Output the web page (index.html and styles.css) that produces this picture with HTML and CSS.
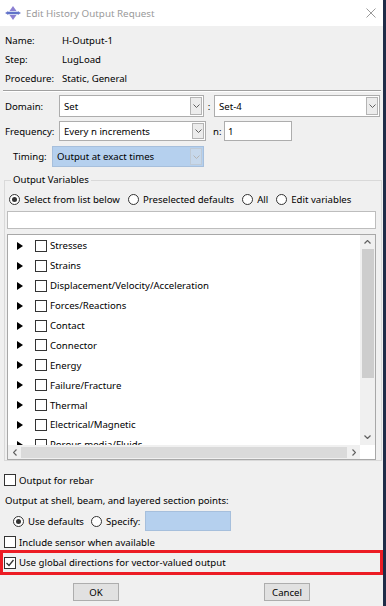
FILE: index.html
```html
<!DOCTYPE html>
<html>
<head>
<meta charset="utf-8">
<title>Edit History Output Request</title>
<link rel="stylesheet" href="styles.css">
</head>
<body>
<div class="window">
  <div class="titlebar">
    <svg class="appicon" width="16" height="14" viewBox="0 0 16 14">
      <path d="M8 0 L11.5 5 H4.5 Z" fill="#8b7fd2"/>
      <path d="M0 7 L3 5.3 V8.7 Z" fill="#6d79cc"/>
      <path d="M16 7 L13 5.3 V8.7 Z" fill="#6d79cc"/>
      <rect x="2.5" y="5.7" width="11" height="2.6" fill="#5f73c9"/>
      <path d="M4.5 9 H11.5 L8 14 Z" fill="#8b7fd2"/>
    </svg>
    <span class="title">Edit History Output Request</span>
    <svg class="close" width="10" height="10" viewBox="0 0 10 10">
      <path d="M0.5 0.5 L9.5 9.5 M9.5 0.5 L0.5 9.5" stroke="#9a9a9a" stroke-width="1"/>
    </svg>
  </div>

  <div class="info">
    <span>Name:</span><span>H-Output-1</span>
    <span>Step:</span><span>LugLoad</span>
    <span>Procedure:</span><span>Static, General</span>
  </div>

  <div class="sep"></div>

  <div class="row row-domain">
    <span class="lbl lbl-domain">Domain:</span>
    <div class="combo c-domain">
      <span class="val">Set</span>
      <span class="dd"><svg width="7" height="4" viewBox="0 0 7 4"><polyline points="0.5,0.5 3.5,3.5 6.5,0.5" fill="none" stroke="#606060"/></svg></span>
    </div>
    <span class="colon">:</span>
    <div class="combo c-set">
      <span class="val">Set-4</span>
      <span class="dd"><svg width="7" height="4" viewBox="0 0 7 4"><polyline points="0.5,0.5 3.5,3.5 6.5,0.5" fill="none" stroke="#606060"/></svg></span>
    </div>
  </div>

  <div class="row row-freq">
    <span class="lbl lbl-domain">Frequency:</span>
    <div class="combo c-freq">
      <span class="val">Every n increments</span>
      <span class="dd"><svg width="7" height="4" viewBox="0 0 7 4"><polyline points="0.5,0.5 3.5,3.5 6.5,0.5" fill="none" stroke="#606060"/></svg></span>
    </div>
    <span class="nlbl">n:</span>
    <div class="textbox n-input">1</div>
  </div>

  <div class="row row-timing">
    <span class="lbl lbl-timing">Timing:</span>
    <div class="combo c-timing">
      <span class="val">Output at exact times</span>
      <span class="dd dd-disabled"><svg width="7" height="4" viewBox="0 0 7 4"><polyline points="0.5,0.5 3.5,3.5 6.5,0.5" fill="none" stroke="#b4b4b4"/></svg></span>
    </div>
  </div>

  <fieldset class="group">
    <legend>Output Variables</legend>
    <div class="radios">
      <span class="opt"><span class="radio on"></span>Select from list below</span>
      <span class="opt"><span class="radio"></span>Preselected defaults</span>
      <span class="opt"><span class="radio"></span>All</span>
      <span class="opt"><span class="radio"></span>Edit variables</span>
    </div>
    <div class="filter"></div>
    <div class="listbox">
      <div class="items">
        <div class="item"><span class="tri"></span><span class="cb"></span>Stresses</div>
        <div class="item"><span class="tri"></span><span class="cb"></span>Strains</div>
        <div class="item"><span class="tri"></span><span class="cb"></span>Displacement/Velocity/Acceleration</div>
        <div class="item"><span class="tri"></span><span class="cb"></span>Forces/Reactions</div>
        <div class="item"><span class="tri"></span><span class="cb"></span>Contact</div>
        <div class="item"><span class="tri"></span><span class="cb"></span>Connector</div>
        <div class="item"><span class="tri"></span><span class="cb"></span>Energy</div>
        <div class="item"><span class="tri"></span><span class="cb"></span>Failure/Fracture</div>
        <div class="item"><span class="tri"></span><span class="cb"></span>Thermal</div>
        <div class="item"><span class="tri"></span><span class="cb"></span>Electrical/Magnetic</div>
        <div class="item"><span class="tri"></span><span class="cb"></span>Porous media/Fluids</div>
      </div>
      <div class="vscroll">
        <span class="arrow"><svg width="7" height="4" viewBox="0 0 7 4"><polyline points="0.5,3.5 3.5,0.5 6.5,3.5" fill="none" stroke="#606060" stroke-width="1.2"/></svg></span>
        <span class="vthumb"></span>
        <span class="arrow arrow-down"><svg width="7" height="4" viewBox="0 0 7 4"><polyline points="0.5,0.5 3.5,3.5 6.5,0.5" fill="none" stroke="#606060" stroke-width="1.2"/></svg></span>
      </div>
      <div class="hscroll">
        <span class="harrow"><svg width="4" height="7" viewBox="0 0 4 7"><polyline points="3.5,0.5 0.5,3.5 3.5,6.5" fill="none" stroke="#606060" stroke-width="1.2"/></svg></span>
        <span class="hthumb"></span>
        <span class="harrow"><svg width="4" height="7" viewBox="0 0 4 7"><polyline points="0.5,0.5 3.5,3.5 0.5,6.5" fill="none" stroke="#606060" stroke-width="1.2"/></svg></span>
      </div>
      <div class="corner"></div>
    </div>
  </fieldset>

  <div class="line line-rebar"><span class="cb"></span>Output for rebar</div>
  <div class="line line-text">Output at shell, beam, and layered section points:</div>
  <div class="line line-points">
    <span class="opt"><span class="radio on"></span>Use defaults</span>
    <span class="opt"><span class="radio"></span>Specify:</span>
    <span class="spec-input"></span>
  </div>
  <div class="line line-sensor"><span class="cb"></span>Include sensor when available</div>
  <div class="redbox">
    <span class="cb checked"><svg width="10" height="10" viewBox="0 0 10 10"><polyline points="1.5,5 4,7.5 8.5,2" fill="none" stroke="#333" stroke-width="1.3"/></svg></span>Use global directions for vector-valued output
  </div>

  <div class="buttons">
    <span class="btn btn-ok">OK</span>
    <span class="btn btn-cancel">Cancel</span>
  </div>
</div>
</body>
</html>
```

FILE: styles.css
```css
* { box-sizing: border-box; }

body {
  margin: 0;
  background: #ffffff;
  font-family: "Noto Sans", "Open Sans", sans-serif;
  font-size: 9.6px;
  color: #000;
}

.window {
  width: 386px;
  height: 606px;
  background: #f0f0f0;
  border-right: 3px solid #1f2c48;
  display: flex;
  flex-direction: column;
  overflow: hidden;
}

.titlebar {
  height: 26px;
  flex: none;
  background: #ffffff;
  display: flex;
  align-items: center;
}
.appicon { margin-left: 5px; }
.title { margin-left: 5px; color: #9a9a9a; font-size: 9.8px; }
.close { margin-left: auto; margin-right: 7px; }

.info {
  display: grid;
  grid-template-columns: 57px auto;
  grid-auto-rows: 19px;
  align-items: center;
  padding: 5px 0 0 5px;
}

.sep {
  margin: 2px 2px 0 3px;
  height: 2px;
  border-top: 1px solid #a0a0a0;
  border-bottom: 1px solid #ffffff;
}

.row { display: flex; align-items: center; flex: none; }
.row-domain { margin-top: 3px; height: 22px; padding-left: 5px; }
.row-freq { margin-top: 4px; height: 20px; padding-left: 5px; }
.row-timing { margin-top: 5px; height: 21px; padding-left: 13px; }

.lbl-domain { width: 54px; }
.lbl-timing { width: 39px; }

.combo {
  height: 100%;
  border: 1px solid #adadad;
  background: #ffffff;
  display: flex;
  align-items: center;
}
.val { flex: 1; padding-left: 4px; white-space: nowrap; }
.dd {
  align-self: stretch;
  width: 12px;
  margin: 1px;
  border: 1px solid #b4b4b4;
  background: #ececec;
  display: flex;
  align-items: center;
  justify-content: center;
}
.dd-disabled { background: #c6d8ec; border-color: #bfcad6; }

.c-domain { width: 145px; }
.colon { width: 10px; text-align: center; }
.c-set { width: 166px; }
.c-freq { width: 147px; }
.nlbl { margin-left: 7px; width: 11px; }
.textbox {
  height: 100%;
  border: 1px solid #adadad;
  background: #ffffff;
  padding-left: 3px;
  display: flex;
  align-items: center;
}
.n-input { width: 68px; }
.c-timing { width: 152px; background: #b5d0ee; border-color: #a6bfdc; }

.group {
  margin: 6px 0 0 4px;
  padding: 3px 5px 0 2px;
  width: 378px;
  min-width: 0;
  border: 1px solid #d9d9d9;
  flex: none;
}
.group legend {
  margin-left: 4px;
  padding: 0 2px;
  line-height: 14px;
}

.radios {
  height: 18px;
  margin-left: 2px;
  display: flex;
  align-items: center;
}
.opt { display: flex; align-items: center; margin-right: 8px; white-space: nowrap; }
.radio {
  width: 11px;
  height: 11px;
  border: 1px solid #333333;
  border-radius: 50%;
  background: #ffffff;
  margin-right: 4px;
  flex: none;
  display: flex;
  align-items: center;
  justify-content: center;
}
.radio.on::after {
  content: "";
  width: 5px;
  height: 5px;
  border-radius: 50%;
  background: #333333;
}

.filter {
  margin-top: 3px;
  height: 18px;
  border: 1px solid #bdbdbd;
  background: #ffffff;
}

.listbox {
  margin-top: 5px;
  height: 226px;
  border: 1px solid #a8a8a8;
  background: #ffffff;
  display: grid;
  grid-template-columns: 1fr 15px;
  grid-template-rows: 1fr 14px;
}
.items { overflow: hidden; padding-top: 1px; }
.item {
  height: 19.9px;
  display: flex;
  align-items: center;
  white-space: nowrap;
}
.tri {
  margin-left: 9px;
  width: 0;
  height: 0;
  border-top: 4.5px solid transparent;
  border-bottom: 4.5px solid transparent;
  border-left: 6px solid #000;
}
.cb {
  width: 12px;
  height: 12px;
  border: 1px solid #333333;
  background: #ffffff;
  margin-right: 3px;
  flex: none;
  display: flex;
  align-items: center;
  justify-content: center;
}
.item .cb { margin-left: 12px; }

.vscroll {
  background: #f0f0f0;
  display: flex;
  flex-direction: column;
  align-items: center;
}
.arrow { height: 14px; display: flex; align-items: center; justify-content: center; }
.vthumb { width: 12px; height: 129px; background: #cdcdcd; }
.arrow-down { margin-top: auto; height: 16px; }

.hscroll {
  background: #f0f0f0;
  display: flex;
  align-items: center;
}
.harrow { width: 13px; display: flex; justify-content: center; }
.hthumb { flex: 1; height: 11px; background: #dadada; }
.corner { background: #ffffff; }

.line { display: flex; align-items: center; flex: none; white-space: nowrap; }
.line-rebar { margin-top: 11px; height: 16px; padding-left: 4px; }
.line-text { margin-top: 4px; height: 16px; padding-left: 5px; }
.line-points { margin-top: 3px; height: 20px; padding-left: 13px; }
.line-points .opt { margin-right: 7px; }
.line-points .opt + .opt { margin-right: 5px; }
.spec-input {
  width: 86px;
  height: 20px;
  background: #b5d0ee;
  border: 1px solid #a6bfdc;
}
.line-sensor { margin-top: 4px; height: 14px; padding-left: 4px; }

.redbox {
  margin-top: 1px;
  width: 383px;
  height: 25px;
  border: 3px solid #ec1c24;
  padding-left: 1px;
  display: flex;
  align-items: center;
  flex: none;
  white-space: nowrap;
}

.buttons { margin-top: 8px; display: flex; flex: none; }
.btn {
  width: 46px;
  height: 18px;
  background: #e1e1e1;
  border: 1px solid #adadad;
  display: flex;
  align-items: center;
  justify-content: center;
}
.btn-ok { margin-left: 73px; }
.btn-cancel { margin-left: 145px; }
```
